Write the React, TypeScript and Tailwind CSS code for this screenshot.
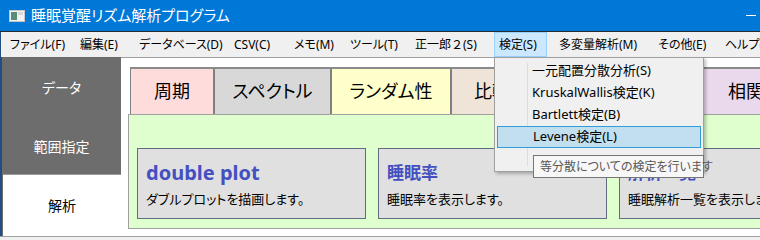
import React from "react";

const menus = [
  { label: "ファイル(F)", w: 70 },
  { label: "編集(E)", w: 59 },
  { label: "データベース(D)", w: 95 },
  { label: "CSV(C)", w: 60 },
  { label: "メモ(M)", w: 56 },
  { label: "ツール(T)", w: 65 },
  { label: "正一郎２(S)", w: 84, plain: true },
  { label: "検定(S)", w: 60, active: true },
  { label: "多変量解析(M)", w: 99 },
  { label: "その他(E)", w: 67 },
  { label: "ヘルプ(H)", w: 70 },
];

const tabs = [
  { label: "周期", w: 83, bg: "bg-[#ffdcdc]" },
  { label: "スペクトル", w: 117, bg: "bg-[#d8d8d8]" },
  { label: "ランダム性", w: 120, bg: "bg-[#ffffcc]" },
  { label: "比較検定", w: 118, bg: "bg-[#f0e4d8]" },
  { label: "日内変動", w: 120, bg: "bg-[#dde8f8]" },
  { label: "相関分析", w: 150, bg: "bg-[#ead9ec]" },
];

const cards = [
  { title: "double plot", size: "text-[20px]", desc: "ダブルプロットを描画します。" },
  { title: "睡眠率", size: "text-[17px]", desc: "睡眠率を表示します。" },
  { title: "解析一覧", size: "text-[17px]", desc: "睡眠解析一覧を表示します。" },
];

const tests = ["一元配置分散分析(S)", "KruskalWallis検定(K)", "Bartlett検定(B)", "Levene検定(L)"];

function AppIcon() {
  return (
    <svg width="16" height="12" viewBox="0 0 16 12">
      <rect x="0.5" y="0.5" width="15" height="11" fill="#f2f2f2" stroke="#c8c8c8" />
      <rect x="2" y="2" width="6" height="8" fill="#5b8a76" />
      <rect x="9" y="2" width="5" height="3" fill="#d8d8d8" />
    </svg>
  );
}

export default function App() {
  return (
    <div className="relative w-[760px] h-[240px] overflow-hidden bg-[#f0f0f0] font-['Noto_Sans','Noto_Sans_CJK_JP',sans-serif] [font-feature-settings:'palt'] text-black">
      {/* タイトルバー */}
      <div className="h-[31px] bg-[#0078d7] flex items-center pl-[9px] text-white">
        <AppIcon />
        <span className="ml-[6px] text-[15px] leading-none">睡眠覚醒リズム解析プログラム</span>
        <div className="ml-auto mr-[4px] w-[10px] h-px bg-white" />
      </div>
      <div className="h-px bg-[#2a2a2a]" />

      <div className="border-l border-[#1f4f82]">
        {/* メニューバー */}
        <div className="h-[25px] flex items-stretch pl-[4px] text-[12px] leading-none whitespace-nowrap">
          {menus.map((m) => (
            <div key={m.label} className="shrink-0 flex items-stretch" style={{ width: m.w }}>
              <div
                className={
                  (m.active
                    ? "flex items-center px-[4px] w-[53px] bg-[#cce8ff] border border-[#99d1ff]"
                    : "flex items-center px-[5px]") + (m.plain ? " [font-feature-settings:normal]" : "")
                }
              >
                {m.label}
              </div>
            </div>
          ))}
        </div>

        {/* メイン */}
        <div className="flex h-[179px] border-l border-[#1f4f82]">
          <div className="w-[119px] shrink-0 bg-[#6d6d6d] flex flex-col text-[14px]">
            <div className="h-[61px] flex items-center justify-center text-white">データ</div>
            <div className="h-[56px] flex items-center justify-center text-white">範囲指定</div>
            <div className="flex-1 ml-px bg-white border-t border-[#9a9a9a] flex items-center justify-center">解析</div>
          </div>

          <div className="flex-1 bg-white border-t border-[#a0a0a0] pt-[9px] pl-[7px] overflow-hidden">
            <div className="flex h-[47px] ml-[2px] border-t-2 border-[#8a8a8a]">
              {tabs.map((t, i) => (
                <div
                  key={t.label}
                  className={`${t.bg} shrink-0 flex items-center justify-center text-[18px] border-[#808080] ${i === 0 ? "border-l" : "border-l-2"}`}
                  style={{ width: t.w }}
                >
                  {t.label}
                </div>
              ))}
            </div>
            <div className="h-[115px] bg-[#dfffcf] border border-[#a0a0a0] pt-[33px] pl-[8px] flex gap-[12px] w-[700px]">
              {cards.map((c) => (
                <div key={c.title} className="w-[229px] h-[71px] shrink-0 bg-[#e0e0e0] border border-[#5e6e80] pl-[8px] pt-[12px]">
                  <div className={`${c.size} font-bold text-[#4450c0] leading-[24px] h-[26px]`}>{c.title}</div>
                  <div className="text-[13px] leading-[20px] mt-[2px] whitespace-nowrap">{c.desc}</div>
                </div>
              ))}
            </div>
          </div>
        </div>
      </div>
      <div className="h-px bg-[#a0a0a0]" />

      {/* 検定メニュー */}
      <div className="absolute left-[494px] top-[57px] w-[210px] h-[115px] bg-[#f0f0f0] border border-[#a0a0a0] shadow-[2px_2px_3px_rgba(0,0,0,0.25)] pt-[2px] px-[2px] text-[13px]">
        <div className="absolute left-[32px] top-[5px] bottom-[5px] w-px bg-[#dcdcdc]" />
        {tests.map((t, i) => (
          <div
            key={t}
            className={`relative h-[22px] flex items-center pl-[35px] ${i === 3 ? "bg-[#c2dfef] border border-[#2d9fd6] pl-[34px]" : ""}`}
          >
            {t}
          </div>
        ))}
      </div>

      {/* ツールチップ */}
      <div className="absolute left-[533px] top-[155px] w-[171px] h-[23px] bg-[#f7f7f7] border border-[#767676] flex items-center pl-[6px] text-[12px] text-[#575757] whitespace-nowrap">
        等分散についての検定を行います
      </div>
    </div>
  );
}
